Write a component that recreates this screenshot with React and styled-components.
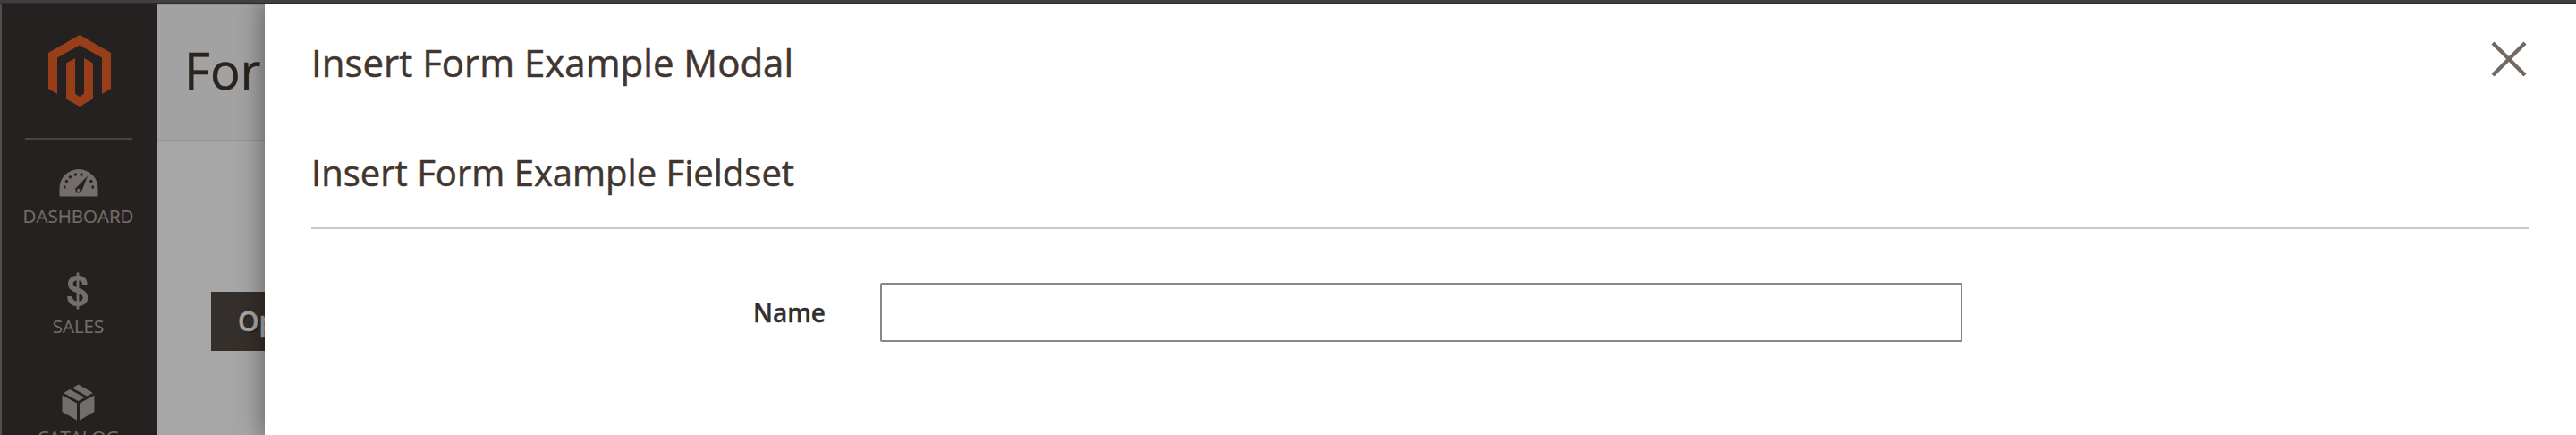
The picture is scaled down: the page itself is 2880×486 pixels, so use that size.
import React from 'react';
import styled, { createGlobalStyle } from 'styled-components';

const GlobalStyle = createGlobalStyle`
  * { box-sizing: border-box; }
  body {
    margin: 0;
    overflow: hidden;
    font-family: 'Open Sans', 'Noto Sans', sans-serif;
    color: #41362f;
  }
`;

const Window = styled.div`
  height: 486px;
  display: flex;
  flex-direction: column;
  background: #a6a6a6;
  overflow: hidden;
`;

const TopEdge = styled.div`
  flex: 0 0 4px;
  background: #404040;
  border-bottom: 1px solid #2a2a2a;
`;

const Workspace = styled.div`
  flex: 1;
  min-height: 0;
  display: flex;
`;

const Sidebar = styled.nav`
  flex: 0 0 176px;
  display: flex;
  flex-direction: column;
  align-items: center;
  padding-right: 3px;
  border-left: 2px solid #524e4c;
  background: #252120;
  overflow: hidden;
`;

const LogoArea = styled.div`
  flex: 0 0 152px;
  width: 120px;
  padding-top: 35px;
  display: flex;
  justify-content: center;
  border-bottom: 2px solid #4a4441;

  svg { margin-left: 2px; }
`;

const MenuItem = styled.a`
  flex: 0 0 124px;
  display: flex;
  flex-direction: column;
  align-items: center;
  padding-top: ${(p) => p.$top}px;
  color: #736e6a;
  font-size: 20.500px;
  line-height: 28px;
  text-transform: uppercase;
  -webkit-text-stroke: 0.2px currentColor;
`;

const IconSlot = styled.span`
  height: 44px;
  margin-bottom: ${(p) => p.$gap}px;
  display: flex;
  align-items: center;
`;

const Page = styled.main`
  flex: 0 0 120px;
  overflow: hidden;
  white-space: nowrap;
`;

const PageHeader = styled.header`
  height: 154px;
  padding: 40px 0 0 30px;
  background: #a2a2a2;
  border-top: 2px solid #949494;
  border-bottom: 2px solid #939393;
`;

const PageTitle = styled.h1`
  margin: 0;
  font-size: 56px;
  font-weight: 400;
  line-height: 64px;
  color: #2b231d;
  -webkit-text-stroke: 0.5px currentColor;
`;

const OpenButton = styled.button`
  display: block;
  margin: 168px 0 0 60px;
  height: 66px;
  padding: 0 30px;
  border: 0;
  background: #352f2b;
  color: #a6a6a6;
  font: 600 30px/66px 'Open Sans', sans-serif;
  text-shadow: 2px 2px 0 rgba(0, 0, 0, 0.25);
  -webkit-text-stroke: 0.5px currentColor;
`;

const Modal = styled.section`
  position: relative;
  flex: 1;
  padding: 0 52px;
  background: #fff;
  box-shadow: 0 0 24px 4px rgba(0, 0, 0, 0.35);
  clip-path: inset(0 0 0 -60px);
`;

const ModalHeader = styled.header`
  display: flex;
  justify-content: space-between;
  height: 150px;
  padding-top: 36px;
`;

const ModalTitle = styled.h2`
  margin: 0;
  font-size: 42px;
  font-weight: 400;
  line-height: 60px;
  -webkit-text-stroke: 0.5px currentColor;
`;

const CloseButton = styled.button`
  width: 40px;
  height: 40px;
  margin: 6px 3px 0 0;
  padding: 0;
  border: 0;
  background: none;
  svg { display: block; }
`;

const FieldsetTitle = styled.h3`
  margin: 0 0 60px;
  height: 102px;
  padding-top: 12px;
  border-bottom: 2px solid #cacaca;
  font-size: 40px;
  font-weight: 400;
  line-height: 54px;
  -webkit-text-stroke: 0.5px currentColor;
`;

const Field = styled.label`
  display: flex;
  align-items: center;
`;

const FieldLabel = styled.span`
  width: 575px;
  text-align: right;
  font-size: 28px;
  font-weight: 600;
  line-height: 40px;
  color: #303030;
  -webkit-text-stroke: 0.3px currentColor;
`;

const TextInput = styled.input`
  width: 1210px;
  height: 66px;
  margin-left: 61px;
  padding: 0 20px;
  border: 2px solid #878787;
  border-radius: 2px;
  background: #fff;
  font: 28px 'Open Sans', sans-serif;
`;

const Logo = () => (
  <svg width="70" height="80" viewBox="0 0 70 80" fill="#983f19">
    <path d="M35 0 70 20V60L60 66V25.500L35 11.500 10 25.500V66L0 60V20Z" />
    <path d="M20 31.500 30 26V65.500L35 69 40 65.500V26L50 31.500V71.500L35 80 20 71.500Z" />
  </svg>
);

const Gauge = () => (
  <svg width="44" height="31" viewBox="0 0 44 31">
    <path fill="#736e6a" d="M.5 30.500V21.500a21.500 21.500 0 0 1 43 0v9Z" />
    <g fill="#252120">
      <path d="M32 7.500 25.500 24 23 26.500h-3.500L18 22Z" />
      <rect x="17" y="4.500" width="3" height="3" transform="rotate(-14 18.500 6)" />
      <rect x="23.500" y="4.500" width="3" height="3" transform="rotate(14 25 6)" />
      <rect x="11" y="7.300" width="3" height="3" transform="rotate(-40 12.500 8.800)" />
      <rect x="7" y="12" width="3" height="3" transform="rotate(-60 8.500 13.500)" />
      <rect x="5" y="18.500" width="2.500" height="3" />
      <rect x="34.300" y="12" width="3" height="3" transform="rotate(60 35.800 13.500)" />
      <rect x="36.500" y="18.500" width="2.500" height="3" />
    </g>
    <circle cx="21.700" cy="23.500" r="1.700" fill="#736e6a" />
  </svg>
);

const Dollar = () => (
  <svg width="24" height="42" viewBox="0 0 24 42" fill="none" stroke="#736e6a">
    <path strokeWidth="5.600" d="M19.800 14C19.800 9 17 6.500 12 6.500S3.800 9 3.800 13c0 9.500 16.600 5.500 16.600 15.500 0 4.500-3.400 7-8.400 7s-9-2.500-9-8.500" />
    <path strokeWidth="2.800" d="M12 0.500V41.500" />
  </svg>
);

const Box = () => (
  <svg width="37" height="41" viewBox="0 0 37 41" fill="#736e6a">
    <path d="M.5 12.500 17 21.500V40.500L.5 31Z" />
    <path d="M36.500 12.500 20 21.500V40.500L36.500 31Z" />
    <path d="M2 10 9 6 25.500 15 18.500 19Z" />
    <path d="M12 4.500 18.500.5 35 10 28 13.500Z" />
  </svg>
);

const Cross = () => (
  <svg width="40" height="40" viewBox="0 0 40 40" stroke="#736963" strokeWidth="4.400">
    <path d="M2 2 38 38M38 2 2 38" />
  </svg>
);

export default function App() {
  return (
    <>
      <GlobalStyle />
      <Window>
        <TopEdge />
        <Workspace>
          <Sidebar>
            <LogoArea><Logo /></LogoArea>
            <MenuItem $top={26}><IconSlot $gap={1}><Gauge /></IconSlot>Dashboard</MenuItem>
            <MenuItem $top={23}><IconSlot $gap={3}><Dollar /></IconSlot>Sales</MenuItem>
            <MenuItem $top={23}><IconSlot $gap={3}><Box /></IconSlot>Catalog</MenuItem>
          </Sidebar>
          <Page>
            <PageHeader><PageTitle>Form</PageTitle></PageHeader>
            <OpenButton>Open</OpenButton>
          </Page>
          <Modal>
            <ModalHeader>
              <ModalTitle>Insert Form Example Modal</ModalTitle>
              <CloseButton aria-label="Close"><Cross /></CloseButton>
            </ModalHeader>
            <FieldsetTitle>Insert Form Example Fieldset</FieldsetTitle>
            <Field>
              <FieldLabel>Name</FieldLabel>
              <TextInput />
            </Field>
          </Modal>
        </Workspace>
      </Window>
    </>
  );
}
